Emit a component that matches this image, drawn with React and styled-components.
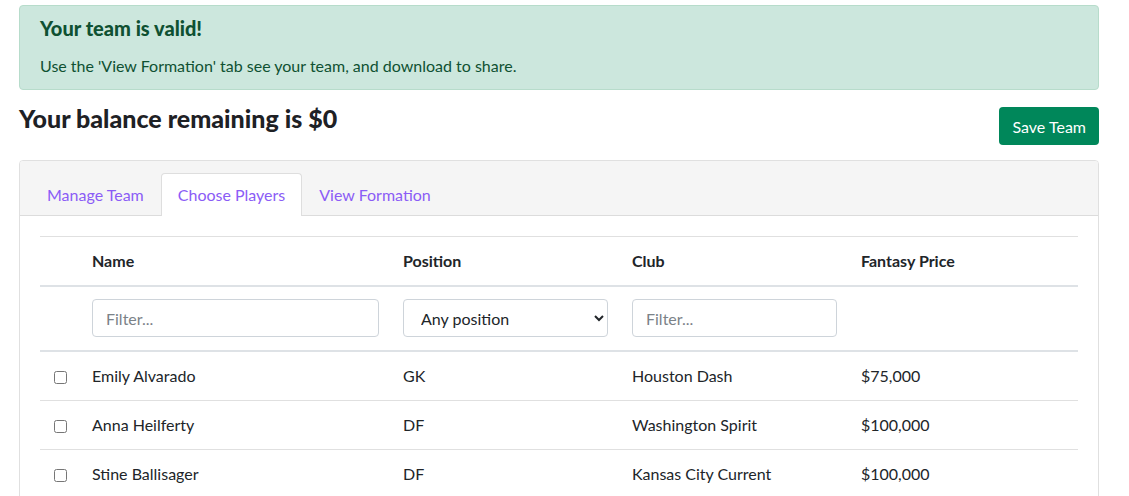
import React from "react";
import styled, { createGlobalStyle } from "styled-components";

const GlobalStyle = createGlobalStyle`
  body {
    margin: 0;
    background: #fff;
    font-family: Lato, "Liberation Sans", sans-serif;
    font-size: 16px;
    color: #212529;
  }
`;

const players = [
  { name: "Emily Alvarado", pos: "GK", club: "Houston Dash", price: "$75,000" },
  { name: "Anna Heilferty", pos: "DF", club: "Washington Spirit", price: "$100,000" },
  { name: "Stine Ballisager", pos: "DF", club: "Kansas City Current", price: "$100,000" },
];

const Page = styled.div`
  width: 1080px;
  padding: 5px 0 0 19px;
`;

const Alert = styled.div`
  background: #cce7dd;
  border: 1px solid #b7dccb;
  border-radius: 4px;
  color: #0f5132;
  padding: 10px 20px 11px;
  margin-bottom: 17px;

  h4 {
    margin: 0 0 14px;
    font-size: 20px;
    font-weight: 900;
    line-height: 24px;
  }
  p {
    margin: 0;
    line-height: 24px;
  }
`;

const TopRow = styled.div`
  display: flex;
  justify-content: space-between;
  align-items: flex-start;
  margin-bottom: 15px;
`;

const Balance = styled.h2`
  margin: 0;
  font-size: 25px;
  line-height: 22px;
  font-weight: 900;
  color: #1e2125;
`;

const SaveButton = styled.button`
  background: #00875a;
  color: #fff;
  border: none;
  border-radius: 4px;
  height: 38px;
  padding: 0 13px;
  font-family: inherit;
  font-size: 16px;
  cursor: pointer;
`;

const Card = styled.div`
  border: 1px solid #e0e0e0;
  border-radius: 4px;
  overflow: hidden;
`;

const CardHeader = styled.div`
  background: #f5f5f5;
  border-bottom: 1px solid #dcdcdc;
  padding: 12px 10px 0;
  display: flex;
`;

const Tab = styled.div`
  padding: 0 16px;
  height: 42px;
  line-height: 42px;
  color: #8b5cf6;
  border: 1px solid ${(p) => (p.$active ? "#dedede" : "transparent")};
  border-bottom: none;
  border-radius: 4px 4px 0 0;
  background: ${(p) => (p.$active ? "#fff" : "transparent")};
  margin-bottom: -1px;
`;

const CardBody = styled.div`
  padding: 20px;
`;

const Table = styled.table`
  width: 100%;
  border-collapse: collapse;
  table-layout: fixed;
  border-top: 1px solid #e0e0e0;
`;

const Th = styled.th`
  text-align: left;
  font-weight: 700;
  padding: 12px 8px;
  line-height: 24px;
`;

const Td = styled.td`
  padding: ${(p) => (p.$filter ? "12px 8px 13px" : "12px 8px")};
  line-height: 24px;
  vertical-align: middle;
`;

const Row = styled.tr`
  border-bottom: ${(p) => (p.$thick ? "2px solid #dee2e6" : "1px solid #e0e0e0")};
`;

const Input = styled.input`
  box-sizing: border-box;
  width: ${(p) => p.$w}px;
  height: 38px;
  border: 1px solid #ced4da;
  border-radius: 4px;
  padding: 0 13px;
  font-family: inherit;
  font-size: 16px;
  color: #212529;
  &::placeholder {
    color: #7b8288;
  }
`;

const Select = styled.select`
  box-sizing: border-box;
  width: 205px;
  height: 38px;
  border: 1px solid #ced4da;
  border-radius: 4px;
  padding: 0 13px;
  font-family: inherit;
  font-size: 16px;
  color: #212529;
  background: #fff;
`;

const Check = styled.input`
  margin: 0 0 0 6px;
  width: 13px;
  height: 13px;
  vertical-align: middle;
`;

export default function App() {
  return (
    <Page>
      <GlobalStyle />
      <Alert>
        <h4>Your team is valid!</h4>
        <p>Use the 'View Formation' tab see your team, and download to share.</p>
      </Alert>
      <TopRow>
        <Balance>Your balance remaining is $0</Balance>
        <SaveButton>Save Team</SaveButton>
      </TopRow>
      <Card>
        <CardHeader>
          <Tab>Manage Team</Tab>
          <Tab $active>Choose Players</Tab>
          <Tab>View Formation</Tab>
        </CardHeader>
        <CardBody>
          <Table>
            <colgroup>
              <col style={{ width: 44 }} />
              <col style={{ width: 311 }} />
              <col style={{ width: 229 }} />
              <col style={{ width: 229 }} />
              <col />
            </colgroup>
            <thead>
              <Row $thick>
                <Th />
                <Th>Name</Th>
                <Th>Position</Th>
                <Th>Club</Th>
                <Th>Fantasy Price</Th>
              </Row>
              <Row $thick>
                <Td $filter />
                <Td $filter>
                  <Input $w={287} placeholder="Filter..." />
                </Td>
                <Td $filter>
                  <Select defaultValue="any">
                    <option value="any">Any position</option>
                    <option value="GK">GK</option>
                    <option value="DF">DF</option>
                    <option value="MF">MF</option>
                    <option value="FW">FW</option>
                  </Select>
                </Td>
                <Td $filter>
                  <Input $w={205} placeholder="Filter..." />
                </Td>
                <Td $filter />
              </Row>
            </thead>
            <tbody>
              {players.map((p) => (
                <Row key={p.name}>
                  <Td>
                    <Check type="checkbox" />
                  </Td>
                  <Td>{p.name}</Td>
                  <Td>{p.pos}</Td>
                  <Td>{p.club}</Td>
                  <Td>{p.price}</Td>
                </Row>
              ))}
            </tbody>
          </Table>
        </CardBody>
      </Card>
    </Page>
  );
}
